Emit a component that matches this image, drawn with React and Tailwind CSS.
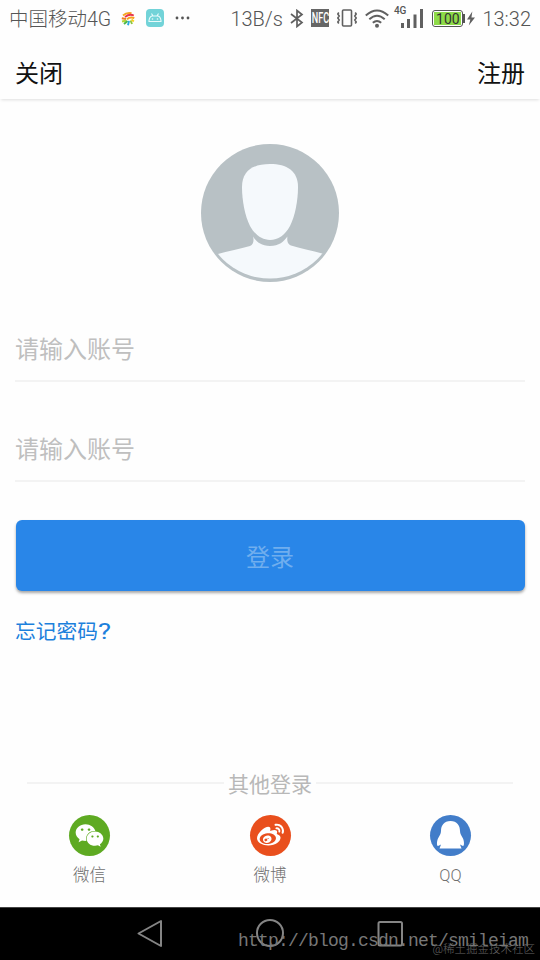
import React from "react";
import { FaWeixin, FaWeibo } from "react-icons/fa";

function QQIcon() {
  return (
    <svg width="41" height="41" viewBox="0 0 41 41" fill="#fff">
      <path d="M20.500 6C14 6 11 10.500 11 16C11 19 9.500 20.500 8 23.500C6.800 26 6.500 31 8 31L11 29.500L9.500 33.500H31.500L30 29.500L33 31C34.500 31 34.200 26 33 23.500C31.500 20.500 30 19 30 16C30 10.500 27 6 20.500 6Z" />
    </svg>
  );
}

function Avatar() {
  return (
    <svg className="block" width="138" height="138" viewBox="0 0 138 138">
      <defs>
        <clipPath id="avatarClip">
          <circle cx="69" cy="67.400" r="67.200" />
        </clipPath>
      </defs>
      <circle cx="69" cy="69" r="69" fill="#b8c1c5" />
      <path
        clipPath="url(#avatarClip)"
        fill="#f5f9fc"
        d="M52 92.500c1 3 .8 8-3 9.500-10 3-21 5-34 8.500v27h108v-27.500c-13-3.500-24-5.500-33-8.500-4-1.500-4-6-3.600-9-3.400 5-8.400 9.500-17.400 9.500S55 97.500 52 92.500z"
      />
      <path
        fill="#f5f9fc"
        d="M69 20c-17 0-28 7-28 23 0 14 3 29 8 39 5 9 12 14 20 14s15-5 20-14c5-10 8-25 8-39 0-16-11-23-28-23z"
      />
    </svg>
  );
}

function StatusBar() {
  return (
    <div className="flex h-[38px] items-center pl-[9px] pr-[9px] text-[20px] text-[#555]">
      <span className="w-[109px] pt-[2px] text-[19.500px] font-light whitespace-nowrap">中国移动4G</span>
      <svg className="mt-[-1px] ml-[3px]" width="14" height="14" viewBox="0 0 14 14" fill="none" strokeWidth="1.900">
        <path d="M2 3.500Q5.500 .3 10.500 1.300" stroke="#f5a623" />
        <path d="M4 5Q8.500 1.600 12.800 3.500" stroke="#e8344e" />
        <path d="M.8 6.200L5 7" stroke="#ef7d22" />
        <path d="M6 7.200Q9 4.500 13.300 6" stroke="#f7a01d" />
        <path d="M1 9.500L5.500 8.500" stroke="#b4d334" />
        <path d="M3 12L6.500 9" stroke="#4cb748" />
        <path d="M7 13.300L8 9" stroke="#29a9e0" />
        <path d="M11 12L9.500 8.500" stroke="#8cc63f" />
        <path d="M12.800 9.500L10.500 7.500" stroke="#f7cf1d" />
      </svg>
      <svg className="mt-[-2px] ml-[11px]" width="18" height="18" viewBox="0 0 18 18" fill="none">
        <rect width="18" height="18" rx="4" fill="#72d3d8" />
        <path d="M3 12.500V11.500q.6-4 3-4.500h6q2.400.5 3 4.500v1zM5.500 4.500l1.500 2.500M12.500 4.500l-1.500 2.500" stroke="#e9fbfb" strokeWidth="1.100" />
        <circle cx="6.500" cy="10" r=".8" fill="#e9fbfb" />
        <circle cx="11.500" cy="10" r=".8" fill="#e9fbfb" />
      </svg>
      <svg className="mt-[-2px] ml-[11px]" width="15" height="4" viewBox="0 0 15 4" fill="#555">
        <circle cx="2" cy="2" r="1.400" />
        <circle cx="7.500" cy="2" r="1.400" />
        <circle cx="13" cy="2" r="1.400" />
      </svg>

      <span className="mt-[-1px] ml-auto font-light">13B/s</span>
      <svg className="mt-[-1px] ml-[7px]" width="14" height="19" viewBox="0 0 14 19" fill="none" stroke="#606060" strokeWidth="1.700">
        <path d="M1 5l11 8.500-5 4V1.500l5 4L1 14" />
      </svg>
      <span className="mt-[-2px] ml-[7px] flex h-[18px] w-[18px] items-center justify-center bg-[#666]">
        <span className="scale-x-[0.650] text-[14px] leading-none font-medium text-white">NFC</span>
      </span>
      <svg className="mt-[-2px] ml-[8px]" width="20" height="18" viewBox="0 0 20 18" fill="none" stroke="#606060" strokeWidth="1.600">
        <rect x="5.500" y="1" width="9" height="16" rx="1" />
        <path d="M1.800 3.500l-1 1.500 1.400 2-1.400 2 1.400 2-1.400 2 1 1.500M18.200 3.500l1 1.500-1.400 2 1.400 2-1.400 2 1.400 2-1 1.500" />
      </svg>
      <svg className="mt-[-2px] ml-[8px]" width="24" height="19" viewBox="0 0 24 19" fill="none" stroke="#606060" strokeWidth="2">
        <path d="M.8 6.500q11.200-10 22.400 0M4.300 10.300q7.700-7 15.400 0M7.800 13.800q4.200-3.600 8.400 0" />
        <circle cx="12" cy="16.800" r="2" fill="#606060" stroke="none" />
      </svg>
      <span className="ml-[5px] h-[30px] text-[10px] leading-[13px] font-medium">4G</span>
      <svg className="mt-[-2px] ml-[-5px]" width="22" height="19" viewBox="0 0 22 19" fill="#606060">
        <rect x="0" y="14" width="3" height="5" />
        <rect x="6" y="10" width="3" height="9" />
        <rect x="12.500" y="5.500" width="3" height="13.500" />
        <rect x="19" y="0" width="3" height="19" />
      </svg>
      <span className="mt-[-1px] ml-[9px] flex h-[17px] w-[31px] items-center justify-center rounded-[3px] border-[1.500px] border-[#555] p-px">
        <span className="flex h-full w-full items-center justify-center bg-[#8edb48] text-[14px] leading-none text-[#333]">
          100
        </span>
      </span>
      <span className="mt-[-1px] h-[9px] w-[2px] bg-[#555]"></span>
      <svg className="mt-[-1px] ml-[2px]" width="8" height="15" viewBox="0 0 9 16" fill="#606060">
        <path d="M6 0L0 9h3.800L2 16l7-9H5z" />
      </svg>
      <span className="mt-[-1px] ml-[7px] font-light">13:32</span>
    </div>
  );
}

function Field({ placeholder }) {
  return (
    <div className="flex h-[66px] items-center border-b-2 border-[#f3f3f3] pt-[4px]">
      <input
        className="w-full text-[24px] outline-none placeholder:text-[#bfbfbf]"
        placeholder={placeholder}
      />
    </div>
  );
}

const others = [
  { name: "微信", bg: "bg-[#5eaa22]", icon: <FaWeixin size={29} color="#fff" /> },
  { name: "微博", bg: "bg-[#e94f1d]", icon: <FaWeibo size={27} color="#fff" /> },
  { name: "QQ", bg: "bg-[#427dc9]", icon: <QQIcon /> },
];

function App() {
  return (
    <div className="flex h-[960px] w-[540px] flex-col overflow-hidden bg-[#fefefe] font-[Roboto,'Noto_Sans_CJK_SC',sans-serif]">
      <StatusBar />
      <header className="flex h-[61px] shrink-0 items-center justify-between px-[15px] pt-[10px] text-[24px] text-[#111] shadow-[0_2px_3px_-1px_rgba(0,0,0,0.13)]">
        <span>关闭</span>
        <span>注册</span>
      </header>

      <main className="flex flex-1 flex-col px-[15px] pt-[45px]">
        <div className="flex justify-center">
          <Avatar />
        </div>
        <div className="mt-[34px] flex flex-col gap-[34px]">
          <Field placeholder="请输入账号" />
          <Field placeholder="请输入账号" />
        </div>
        <button className="mx-[0.500px] mt-[38px] h-[71px] shrink-0 rounded-[6px] bg-[#2986e8] pt-[5px] text-[24px] text-[#70aeee] shadow-[0_2px_3px_rgba(0,0,0,0.35)]">
          登录
        </button>
        <a className="mt-[25px] text-[20.750px] leading-[32px] text-[#1c80dc]">
          忘记密码<span className="inline-block origin-left scale-x-[1.250] text-[22px] leading-none">?</span>
        </a>

        <div className="mt-[120px] flex items-center gap-[4px] px-[12px]">
          <div className="mt-[-3px] h-[2px] flex-1 bg-[#f3f3f3]"></div>
          <span className="pt-px text-[21px] leading-[32px] text-[#b8b8b8]">其他登录</span>
          <div className="mt-[-3px] h-[2px] flex-1 bg-[#f3f3f3]"></div>
        </div>
      </main>

      <div className="flex h-[92px] shrink-0 justify-between px-[59.500px]">
        {others.map((item) => (
          <div key={item.name} className="flex w-[60px] flex-col items-center">
            <div className={`flex h-[41px] w-[41px] items-center justify-center rounded-full ${item.bg}`}>
              {item.icon}
            </div>
            <span className="mt-[8px] text-[16.500px] leading-[24px] font-light text-[#707070]">{item.name}</span>
          </div>
        ))}
      </div>

      <footer className="relative h-[53px] shrink-0 border-t border-[#444] bg-black">
        <div className="flex h-full items-center justify-center gap-[92px]">
          <svg width="28" height="30" viewBox="0 0 28 30" fill="none" stroke="#858585" strokeWidth="2">
            <path d="M25 2v25L2.500 14.500z" strokeLinejoin="round" />
          </svg>
          <svg width="28" height="30" viewBox="0 0 28 30" fill="none" stroke="#858585" strokeWidth="2">
            <circle cx="14" cy="14" r="13" />
          </svg>
          <svg width="28" height="30" viewBox="0 0 28 30" fill="none" stroke="#858585" strokeWidth="2">
            <rect x="2.500" y="3" width="23.500" height="23.500" rx="1.500" />
          </svg>
        </div>
        <span className="absolute top-[21px] left-[238px] font-['Liberation_Mono',monospace] text-[18px] leading-[24px] tracking-[-0.800px] whitespace-nowrap text-[#777]">
          http://blog.csdn.net/smileiam
        </span>
        <span className="absolute top-[33px] right-[5px] text-[11.500px] leading-[16px] font-light whitespace-nowrap text-[#666]">
          @稀土掘金技术社区
        </span>
      </footer>
    </div>
  );
}

export default App;
